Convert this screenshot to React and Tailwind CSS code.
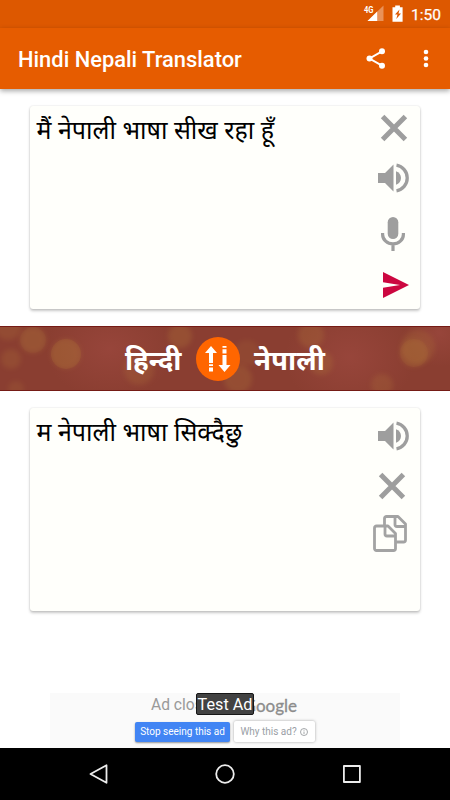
import React from "react";

function Speaker({ className }) {
  return (
    <svg viewBox="0 0 31 30" className={`h-[30px] w-[31px] ${className}`} fill="#9e9e9e">
      <path d="M0 10h7l8.5-8.5v27L7 20H0z" />
      <path d="M18 8.2c3 1 5 3.6 5 6.8s-2 5.800-5 6.800z" />
      <path d="M18.500 2.200a13 13 0 0 1 0 25.600" fill="none" stroke="#9e9e9e" strokeWidth="3.300" />
    </svg>
  );
}

function Cross({ className }) {
  return (
    <svg viewBox="0 0 28 28" className={`h-7 w-7 ${className}`}>
      <path d="M2.600 2.600l22.800 22.800M25.400 2.600L2.600 25.400" stroke="#9e9e9e" strokeWidth="5" />
    </svg>
  );
}

function Mic({ className }) {
  return (
    <svg viewBox="0 0 24 34" className={`h-[34px] w-6 ${className}`}>
      <rect x="6.700" y="0" width="10.600" height="22" rx="5.300" fill="#9e9e9e" />
      <path d="M1.600 16v1.500a10.400 9.400 0 0 0 20.800 0V16M12 26v8" fill="none" stroke="#9e9e9e" strokeWidth="3.200" />
    </svg>
  );
}

function Send({ className }) {
  return (
    <svg viewBox="0 0 26 26" className={`h-[26px] w-[26px] ${className}`} fill="#cc0740">
      <path d="M0 0l26 13L0 26v-10.200L17 13 0 10.200z" />
    </svg>
  );
}

function Copy({ className }) {
  return (
    <svg viewBox="0 0 34 37" className={`h-[37px] w-[34px] ${className}`} fill="none" stroke="#a3a3a3" strokeWidth="2.800" strokeLinejoin="round">
      <path d="M11.500 10V3.500a2 2 0 0 1 2-2H25L32.500 9v16a2 2 0 0 1-2 2H23" />
      <path d="M22 2v7.500a2 2 0 0 0 2 2h8" />
      <path d="M3.500 11h11.500L22.500 18.500V33.500a2 2 0 0 1-2 2H3.500a2 2 0 0 1-2-2V13a2 2 0 0 1 2-2z" />
      <path d="M12 11.500v7.500a2 2 0 0 0 2 2h8" />
    </svg>
  );
}

function StatusBar() {
  return (
    <div className="flex h-7 items-start justify-end bg-[#dd5800] text-white">
      <svg viewBox="0 0 42 28" className="h-7 w-[42px]">
        <text x="1" y="13" fontSize="9" fontWeight="700" fill="#fff" fontFamily="Roboto, sans-serif" textLength="9.500" lengthAdjust="spacingAndGlyphs">4G</text>
        <path d="M4.500 21L20.500 5.500V21z" fill="#fff" opacity="0.350" />
        <path d="M4.500 21l9.700-9.500V21z" fill="#fff" />
        <path d="M29.500 7.300h2.700V5.500h4.700v1.800h2.700V21.700H29.500z" fill="#fff" />
        <path d="M36.500 9.500l-4.500 5h2.500l-1.200 4.500 4.700-5.500h-2.500z" fill="#dd5800" />
      </svg>
      <span className="ml-1.5 mr-2 mt-[6px] w-[31px] whitespace-nowrap text-[15.5px] leading-[19px] [-webkit-text-stroke:0.25px_#fff]">1:50</span>
    </div>
  );
}

function AppBar() {
  return (
    <header className="relative flex h-[61px] items-center bg-[#e65c00] pl-[18px] shadow-[0_2px_5px_rgba(0,0,0,0.35)]">
      <h1 className="flex-1 whitespace-nowrap pt-[2px] text-[21.9px] font-medium leading-7 text-white">Hindi Nepali Translator</h1>
      <svg viewBox="0 0 20 22" className="h-[22px] w-5" fill="#fff">
        <path d="M16 3.300L3.500 10.500 16 17.700" fill="none" stroke="#fff" strokeWidth="2" />
        <circle cx="16" cy="3.300" r="3" />
        <circle cx="3.500" cy="10.500" r="3" />
        <circle cx="16" cy="17.700" r="3" />
      </svg>
      <svg viewBox="0 0 6 20" className="ml-[37px] mr-[21px] h-5 w-1.5" fill="#fff">
        <circle cx="3" cy="3" r="2.300" />
        <circle cx="3" cy="9.500" r="2.300" />
        <circle cx="3" cy="16" r="2.300" />
      </svg>
    </header>
  );
}

function TextCard({ text, className, children }) {
  return (
    <section className={`mx-[30px] flex h-[203px] justify-between rounded-[3px] bg-[#fffffb] pl-[6.5px] shadow-[0_2px_3px_rgba(0,0,0,0.22),0_0_2px_rgba(0,0,0,0.14)] ${className}`}>
      <p className="whitespace-nowrap pt-[5px] font-['Noto_Sans','Noto_Sans_Devanagari',sans-serif] text-[25px] leading-9 text-black">{text}</p>
      <div className="flex w-[48px] flex-col items-start">{children}</div>
    </section>
  );
}

// [cx, cy, r, opacity]
const bokeh = [
  [33, 13, 13, 0.28], [66, 27, 15, 0.24], [11, 32, 10, 0.2], [139, 43, 15, 0.2],
  [180, 9, 12, 0.26], [8, 0, 13, 0.2], [247, 26, 13, 0.14], [311, 8, 13, 0.24],
  [321, 36, 12, 0.24], [238, 52, 14, 0.24], [414, 26, 14, 0.24], [418, 20, 17, 0.2],
  [382, 58, 11, 0.2], [16, 62, 8, 0.16],
];

const sharpBokeh = [[66, 27, 15, 0.18], [33, 13, 13, 0.08], [414, 26, 14, 0.1]];

function LanguageBar() {
  return (
    <div className="relative mt-[17px] flex h-[65px] items-center overflow-hidden border-y border-[#751b16] bg-[#8a3e31] text-white">
      <svg viewBox="0 0 450 65" className="absolute inset-0 h-[65px] w-[450px]">
        <defs>
          <filter id="soft" x="-40%" y="-40%" width="180%" height="180%">
            <feGaussianBlur stdDeviation="2.600" />
          </filter>
          <radialGradient id="rose">
            <stop offset="0" stopColor="#a04a41" stopOpacity="0.600" />
            <stop offset="1" stopColor="#a04a41" stopOpacity="0" />
          </radialGradient>
        </defs>
        <ellipse cx="110" cy="22" rx="65" ry="50" fill="url(#rose)" />
        <ellipse cx="350" cy="30" rx="65" ry="55" fill="url(#rose)" />
        <ellipse cx="440" cy="6" rx="35" ry="34" fill="url(#rose)" />
        {bokeh.map(([cx, cy, r, opacity], i) => (
          <circle key={i} cx={cx} cy={cy} r={r} fill="#b8803a" opacity={opacity} filter="url(#soft)" />
        ))}
        {sharpBokeh.map(([cx, cy, r, opacity], i) => (
          <circle key={i} cx={cx} cy={cy} r={r} fill="#b8803a" opacity={opacity} />
        ))}
      </svg>
      <div className="relative flex w-full items-center font-['Noto_Sans','Noto_Sans_Devanagari',sans-serif] text-[27.7px] font-bold leading-[40px]">
        <span className="w-[181.5px] whitespace-nowrap text-right">हिन्दी</span>
        <svg viewBox="0 0 44 44" className="ml-[14.5px] h-11 w-11 shrink-0" fill="#fff">
          <circle cx="22" cy="22" r="22" fill="#ff6600" />
          <path d="M15 9l6 7h-4v10h-4V16H9zM13 27.200h4v1.900h-4zM13 30.400h4v4h-4z" />
          <path d="M28.500 35l-6-7h4V18h4v10h4zM26.500 9h4v1.800h-4zM26.500 12.200h4v4.400h-4z" />
        </svg>
        <span className="ml-[14px] whitespace-nowrap">नेपाली</span>
      </div>
    </div>
  );
}

function AdBanner() {
  return (
    <div className="relative mx-auto mt-[82px] h-[55px] w-[350px] bg-[#fafafa]">
      <div className="flex justify-between pl-[101px] pr-[103px] pt-[2px] text-[15.6px] leading-5 text-[#999999]">
        <span>Ad closed</span>
        <span className="pt-px font-['Lato',sans-serif] text-[17px] font-normal text-[#8c8c8c] [-webkit-text-stroke:0.3px_#8c8c8c]">Google</span>
      </div>
      <div className="absolute left-[146px] top-0 flex h-[22px] w-[58px] items-center justify-center whitespace-nowrap rounded-[2px] border border-[#161616] bg-[#424242] pt-[2px] text-[16.2px] text-white">
        Test Ad
      </div>
      <div className="flex items-center pl-[85px] pt-[5px] leading-5">
        <span className="h-5 w-[95px] whitespace-nowrap rounded-[2px] bg-[#4285f4] text-center text-[10px] text-white shadow-[0_1px_2px_rgba(0,0,0,0.4)]">Stop seeing this ad</span>
        <span className="ml-[3.5px] flex h-[21px] w-[81px] items-center justify-center gap-[3px] whitespace-nowrap rounded-[2px] bg-white text-[10px] text-[#9aa0a6] shadow-[0_0_3px_rgba(0,0,0,0.35)]">
          Why this ad?
          <svg viewBox="0 0 8 8" className="h-2 w-2" fill="none" stroke="#8e9296" strokeWidth="0.800">
            <circle cx="4" cy="4" r="3.500" />
            <path d="M4 3.500v2.500M4 1.800v.9" />
          </svg>
        </span>
      </div>
    </div>
  );
}

function NavBar() {
  return (
    <nav className="flex h-[52px] items-center justify-between bg-black pl-[88px] pr-[88px]">
      <svg viewBox="0 0 20 20" className="h-5 w-5" fill="none" stroke="#ececec" strokeWidth="1.800" strokeLinejoin="round">
        <path d="M18.500 1.200v17.600L2.500 10z" />
      </svg>
      <svg viewBox="0 0 20 20" className="h-5 w-5" fill="none" stroke="#ececec" strokeWidth="1.800">
        <circle cx="10" cy="10" r="8.800" />
      </svg>
      <svg viewBox="0 0 20 20" className="h-5 w-5" fill="none" stroke="#ececec" strokeWidth="1.800" strokeLinejoin="round">
        <rect x="1.900" y="2" width="16" height="16" />
      </svg>
    </nav>
  );
}

export default function App() {
  return (
    <div className="h-[800px] w-[450px] overflow-hidden bg-white font-['Roboto',sans-serif]">
      <StatusBar />
      <AppBar />
      <TextCard text="मैं नेपाली भाषा सीख रहा हूँ" className="mt-[17px]">
        <Cross className="ml-2 mt-2" />
        <Speaker className="ml-1.5 mt-[21px]" />
        <Mic className="ml-[9px] mt-6" />
        <Send className="ml-[11px] mt-[21px]" />
      </TextCard>
      <LanguageBar />
      <TextCard text="म नेपाली भाषा सिक्दैछु" className="mt-[17px]">
        <Speaker className="ml-1.5 mt-[13px]" />
        <Cross className="ml-1.5 mt-[21px]" />
        <Copy className="ml-px mt-[15px]" />
      </TextCard>
      <AdBanner />
      <NavBar />
    </div>
  );
}
